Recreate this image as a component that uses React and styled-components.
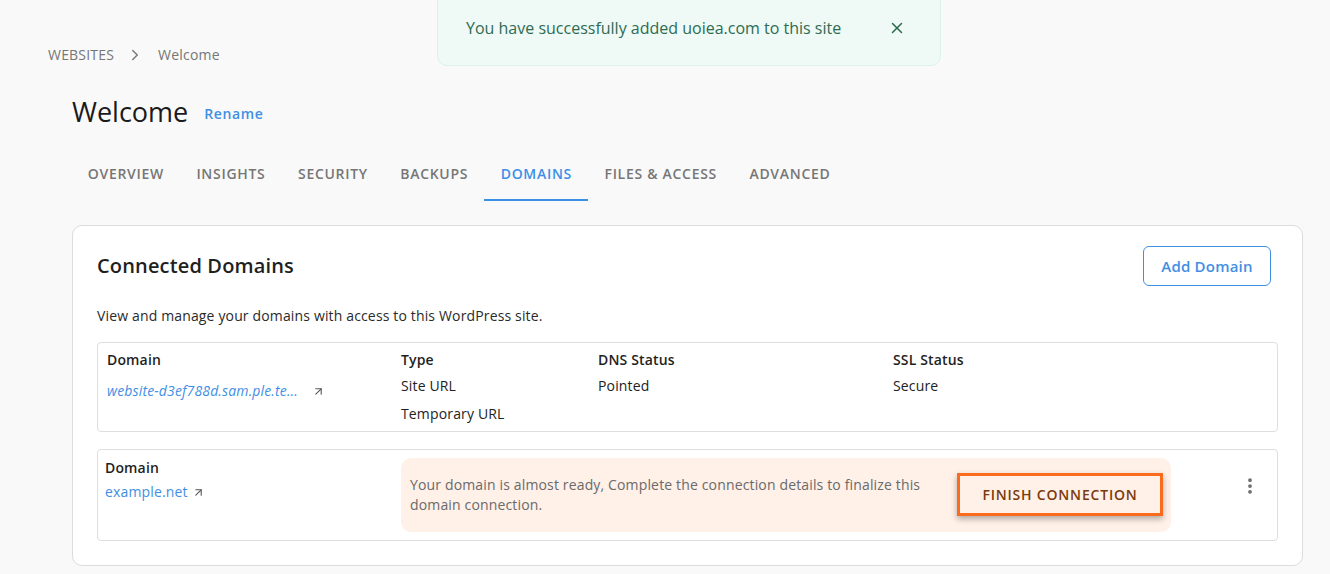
import React from 'react';
import styled, { createGlobalStyle } from 'styled-components';
import { ChevronRight, X, ArrowUpRight, EllipsisVertical } from 'lucide-react';

const GlobalStyle = createGlobalStyle`
  body {
    margin: 0;
    background-color: #f9f9f9;
    font-family: "Open Sans", "Noto Sans", sans-serif;
    color: #1f1f1f;
  }
`;

const StyledPage = styled.div`
  position: relative;
  width: 1330px;
  height: 574px;
  overflow: hidden;
`;

const StyledToast = styled.div`
  position: absolute;
  top: -1px;
  left: 437px;
  width: 504px;
  height: 67px;
  box-sizing: border-box;
  padding: 0 28px 10px;
  display: flex;
  align-items: center;
  justify-content: space-between;
  background-color: #effaf6;
  border: 1px solid #dcf3eb;
  border-radius: 0 0 10px 10px;
  color: #2e6b52;
  font-size: 16px;
  z-index: 2;
  svg {
    color: #2b6a4e;
    margin-right: 6px;
  }
`;

const StyledCrumbs = styled.div`
  display: flex;
  align-items: center;
  padding: 45px 0 0 48px;
  font-size: 14px;
  line-height: 20px;
  letter-spacing: 0.2px;
  color: #767676;
  svg {
    margin: 0 14px 0 12px;
    color: #7a7a7a;
  }
`;

const StyledTitleRow = styled.div`
  display: flex;
  align-items: center;
  gap: 16px;
  padding: 29px 0 0 72px;
`;

const StyledTitle = styled.h1`
  margin: 0;
  font-size: 27px;
  line-height: 36px;
  font-weight: 400;
  color: #1b1b1b;
`;

const StyledRename = styled.span`
  font-size: 14px;
  font-weight: 600;
  letter-spacing: 0.6px;
  color: #3f8fe4;
  padding-top: 2px;
`;

const StyledTabs = styled.nav`
  display: flex;
  margin: 20px 0 0 71.5px;
`;

const StyledTab = styled.div`
  padding: 14px 16.25px 15px;
  font-size: 14px;
  line-height: 20px;
  font-weight: 600;
  letter-spacing: 0.7px;
  text-transform: uppercase;
  color: ${p => (p.$active ? '#3c8fe6' : '#767676')};
  border-bottom: 2px solid ${p => (p.$active ? '#3c8fe6' : 'transparent')};
`;

const StyledCard = styled.section`
  margin: 24px 27px 0 72px;
  padding: 20px 24px 24px;
  background-color: #fff;
  border: 1px solid #dcdcdc;
  border-radius: 10px;
`;

const StyledCardHead = styled.div`
  display: flex;
  align-items: center;
  justify-content: space-between;
`;

const StyledCardTitle = styled.h2`
  margin: 0;
  font-size: 20px;
  line-height: 28px;
  font-weight: 600;
  letter-spacing: 0.15px;
  color: #1f1f1f;
`;

const StyledAddButton = styled.button`
  height: 40px;
  width: 128px;
  margin-right: 7px;
  background: #fff;
  border: 1px solid #3f8fe4;
  border-radius: 6px;
  color: #3f8fe4;
  font-family: inherit;
  font-size: 15px;
  font-weight: 600;
  letter-spacing: 0.2px;
`;

const StyledDesc = styled.p`
  margin: 20px 0 16px;
  font-size: 14px;
  line-height: 20px;
  letter-spacing: 0.15px;
  color: #2a2a2a;
`;

const StyledBox = styled.div`
  border: 1px solid #dedede;
  border-radius: 4px;
  margin-top: ${p => p.$gap || 0}px;
`;

const StyledGrid = styled.div`
  display: grid;
  grid-template-columns: 294px 197px 295px 1fr;
  padding: 7px 9px 7px;
  font-size: 14px;
  line-height: 20px;
  letter-spacing: 0.15px;
  color: #222;
`;

const StyledCol = styled.div`
  display: flex;
  flex-direction: column;
  gap: 8px;
`;

const StyledHead = styled.div`
  font-weight: 600;
  color: #1f1f1f;
  margin-bottom: -2px;
`;

const StyledLink = styled.a`
  display: flex;
  align-items: center;
  gap: ${p => p.$gap}px;
  margin-top: ${p => p.$shift || 0}px;
  color: #3f8fe4;
  font-style: ${p => (p.$italic ? 'italic' : 'normal')};
  text-decoration: none;
  svg {
    color: #555;
    flex-shrink: 0;
  }
`;

const StyledPendingRow = styled.div`
  display: flex;
  align-items: stretch;
  padding: 8px 0 8px 7px;
  font-size: 14px;
  line-height: 20px;
  letter-spacing: 0.15px;
`;

const StyledDomainCell = styled.div`
  width: 296px;
  display: flex;
  flex-direction: column;
  gap: 6px;
`;

const StyledAlert = styled.div`
  width: 770px;
  box-sizing: border-box;
  display: flex;
  align-items: center;
  gap: 20px;
  padding: 15px 8px 16px 9px;
  background-color: #fff0e8;
  border-radius: 10px;
  color: #6a6a6a;
`;

const StyledAlertText = styled.div`
  flex: 1;
`;

const StyledFinishButton = styled.button`
  width: 206px;
  height: 43px;
  flex-shrink: 0;
  background: transparent;
  border: 3px solid #fb6b1d;
  box-shadow: 0 3px 6px rgba(0, 0, 0, 0.3);
  color: #7a3a0c;
  font-family: inherit;
  font-size: 14px;
  font-weight: 600;
  letter-spacing: 0.8px;
`;

const StyledKebab = styled.div`
  flex: 1;
  display: flex;
  align-items: flex-start;
  justify-content: flex-end;
  padding: 18px 17px 0 0;
  color: #6b6b6b;
`;

const tabs = ['Overview', 'Insights', 'Security', 'Backups', 'Domains', 'Files & Access', 'Advanced'];

export default function App() {
  return (
    <StyledPage>
      <GlobalStyle />
      <StyledToast>
        <span>You have successfully added uoiea.com to this site</span>
        <X size={18} strokeWidth={2} />
      </StyledToast>

      <StyledCrumbs>
        <span>WEBSITES</span>
        <ChevronRight size={18} strokeWidth={2} />
        <span>Welcome</span>
      </StyledCrumbs>

      <StyledTitleRow>
        <StyledTitle>Welcome</StyledTitle>
        <StyledRename>Rename</StyledRename>
      </StyledTitleRow>

      <StyledTabs>
        {tabs.map(t => (
          <StyledTab key={t} $active={t === 'Domains'}>
            {t}
          </StyledTab>
        ))}
      </StyledTabs>

      <StyledCard>
        <StyledCardHead>
          <StyledCardTitle>Connected Domains</StyledCardTitle>
          <StyledAddButton>Add Domain</StyledAddButton>
        </StyledCardHead>
        <StyledDesc>View and manage your domains with access to this WordPress site.</StyledDesc>

        <StyledBox>
          <StyledGrid>
            <StyledCol>
              <StyledHead>Domain</StyledHead>
              <StyledLink $italic $gap={14} $shift={5}>
                website-d3ef788d.sam.ple.te...
                <ArrowUpRight size={13} strokeWidth={2} />
              </StyledLink>
            </StyledCol>
            <StyledCol>
              <StyledHead>Type</StyledHead>
              <span>Site URL</span>
              <span>Temporary URL</span>
            </StyledCol>
            <StyledCol>
              <StyledHead>DNS Status</StyledHead>
              <span>Pointed</span>
            </StyledCol>
            <StyledCol>
              <StyledHead>SSL Status</StyledHead>
              <span>Secure</span>
            </StyledCol>
          </StyledGrid>
        </StyledBox>

        <StyledBox $gap={17}>
          <StyledPendingRow>
            <StyledDomainCell>
              <StyledHead>Domain</StyledHead>
              <StyledLink $gap={4}>
                example.net
                <ArrowUpRight size={13} strokeWidth={2} />
              </StyledLink>
            </StyledDomainCell>
            <StyledAlert>
              <StyledAlertText>
                Your domain is almost ready, Complete the connection details to finalize this domain connection.
              </StyledAlertText>
              <StyledFinishButton>FINISH CONNECTION</StyledFinishButton>
            </StyledAlert>
            <StyledKebab>
              <EllipsisVertical size={20} strokeWidth={2.5} />
            </StyledKebab>
          </StyledPendingRow>
        </StyledBox>
      </StyledCard>
    </StyledPage>
  );
}
